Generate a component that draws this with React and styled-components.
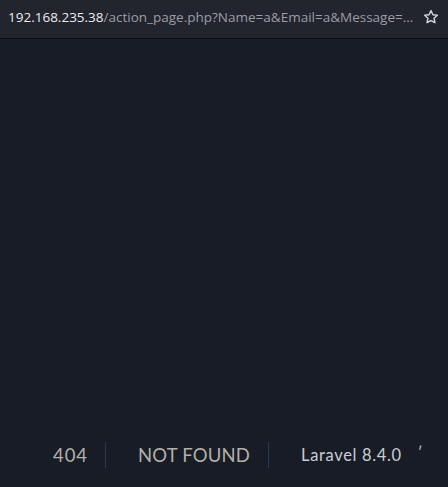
import React from 'react';
import styled, { createGlobalStyle } from 'styled-components';

const GlobalStyle = createGlobalStyle`
  html, body {
    margin: 0;
    padding: 0;
    background: #181c26;
  }
  #root {
    height: 100vh;
  }
`;

const Page = styled.div`
  height: 100vh;
  display: flex;
  flex-direction: column;
  background: #181c26;
  overflow: hidden;
`;

const UrlBar = styled.div`
  height: 38px;
  flex-shrink: 0;
  display: flex;
  align-items: center;
  justify-content: space-between;
  padding: 0 9px 0 8px;
  background: #22242e;
  border-bottom: 1px solid #0c0d11;
  font-family: "Open Sans", "Noto Sans", sans-serif;
  font-size: 13.5px;
  white-space: nowrap;
`;

const Url = styled.div`
  color: #9c9da5;
  margin-top: -5px;
  overflow: hidden;
`;

const Host = styled.span`
  color: #ebebee;
`;

const Star = styled.svg`
  width: 16px;
  height: 16px;
  margin-top: -5px;
  flex-shrink: 0;
`;

const Main = styled.main`
  flex: 1;
  display: flex;
  flex-direction: column;
  justify-content: flex-end;
  padding-bottom: 19px;
`;

const Row = styled.div`
  display: flex;
  align-items: center;
  padding-left: 53px;
  font-family: Lato, "Noto Sans", sans-serif;
  white-space: nowrap;
`;

const Cell = styled.div`
  height: 26px;
  display: flex;
  align-items: center;
  padding: ${(p) => (p.$first ? '0 17px 0 0' : p.$last ? '0 0 0 32px' : '0 18px 0 32px')};
  border-right: ${(p) => (p.$last ? 'none' : '1px solid #2b3a4d')};
  color: ${(p) => p.$color || '#b3afa8'};
  font-size: ${(p) => p.$size || '18.5px'};
  letter-spacing: ${(p) => p.$spacing || '0.05em'};
`;

const Tick = styled.span`
  color: #c9cdd4;
  font-size: 14px;
  margin-left: 16px;
  margin-top: -8px;
`;

export default function App() {
  return (
    <>
      <GlobalStyle />
      <Page>
        <UrlBar>
          <Url>
            <Host>192.168.235.38</Host>/action_page.php?Name=a&amp;Email=a&amp;Message=…
          </Url>
          <Star viewBox="0 0 24 24" fill="none" stroke="#d4d4d8" strokeWidth="2.2" strokeLinejoin="round">
            <path d="M12 2.5l2.9 6.1 6.6.8-4.9 4.6 1.3 6.6L12 17.3l-5.9 3.3 1.3-6.6-4.9-4.6 6.6-.8z" />
          </Star>
        </UrlBar>
        <Main>
          <Row>
            <Cell $first>404</Cell>
            <Cell $spacing="0.01em">NOT FOUND</Cell>
            <Cell $last $color="#c9cdd4" $size="16.5px" $spacing="0.04em">
              Laravel 8.4.0
            </Cell>
            <Tick>′</Tick>
          </Row>
        </Main>
      </Page>
    </>
  );
}
